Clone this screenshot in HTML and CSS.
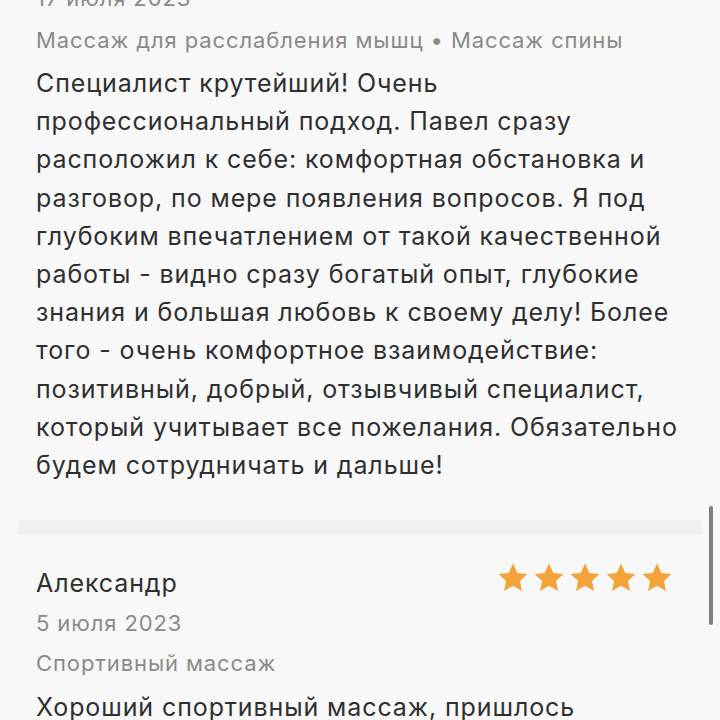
FILE: index.html
```html
<!DOCTYPE html>
<html lang="ru">
<head>
<meta charset="utf-8">
<link rel="stylesheet" href="styles.css">
</head>
<body>
<div class="page">
  <section class="review review-first">
    <div class="meta date">17 июля 2023</div>
    <div class="meta services">Массаж для расслабления мышц • Массаж спины</div>
    <p class="text">Специалист крутейший! Очень<br>профессиональный подход. Павел сразу<br>расположил к себе: комфортная обстановка и<br>разговор, по мере появления вопросов. Я под<br>глубоким впечатлением от такой качественной<br>работы - видно сразу богатый опыт, глубокие<br>знания и большая любовь к своему делу! Более<br>того - очень комфортное взаимодействие:<br>позитивный, добрый, отзывчивый специалист,<br>который учитывает все пожелания. Обязательно<br>будем сотрудничать и дальше!</p>
  </section>
  <div class="divider"></div>
  <section class="review review-second">
    <div class="head">
      <div class="name">Александр</div>
      <div class="stars">
        <svg viewBox="0 0 24 24"><path d="M12 1.8l3.05 6.6 7.15.8-5.3 4.85 1.45 7.1L12 17.55 5.65 21.15l1.45-7.1L1.8 9.2l7.15-.8z"/></svg>
        <svg viewBox="0 0 24 24"><path d="M12 1.8l3.05 6.6 7.15.8-5.3 4.85 1.45 7.1L12 17.55 5.65 21.15l1.45-7.1L1.8 9.2l7.15-.8z"/></svg>
        <svg viewBox="0 0 24 24"><path d="M12 1.8l3.05 6.6 7.15.8-5.3 4.85 1.45 7.1L12 17.55 5.65 21.15l1.45-7.1L1.8 9.2l7.15-.8z"/></svg>
        <svg viewBox="0 0 24 24"><path d="M12 1.8l3.05 6.6 7.15.8-5.3 4.85 1.45 7.1L12 17.55 5.65 21.15l1.45-7.1L1.8 9.2l7.15-.8z"/></svg>
        <svg viewBox="0 0 24 24"><path d="M12 1.8l3.05 6.6 7.15.8-5.3 4.85 1.45 7.1L12 17.55 5.65 21.15l1.45-7.1L1.8 9.2l7.15-.8z"/></svg>
      </div>
    </div>
    <div class="meta date">5 июля 2023</div>
    <div class="meta services">Спортивный массаж</div>
    <p class="text">Хороший спортивный массаж, пришлось</p>
  </section>
</div>
<div class="scrollbar"></div>
</body>
</html>
```
FILE: styles.css
```css
html, body {
  margin: 0;
  padding: 0;
  background: #f8f8f8;
  height: 720px;
  overflow: hidden;
}
body {
  font-family: Inter, "Noto Sans", sans-serif;
  color: #333333;
}
.page {
  padding: 0 36px;
}
.review-first {
  margin-top: -23px;
}
.meta {
  font-size: 22px;
  line-height: 42px;
  letter-spacing: 0.9px;
  color: #8a8a8a;
  white-space: nowrap;
}
.text {
  margin: 3px 0 0;
  font-size: 25px;
  line-height: 38.2px;
  letter-spacing: 0.9px;
  color: #2f2f2f;
  white-space: nowrap;
}
.divider {
  margin: 36px -18px 0;
  height: 15px;
  background: #f1f1f1;
}
.review-second {
  padding-top: 28px;
}
.review-second .meta {
  line-height: 40px;
}
.review-second .text {
  margin-top: 5px;
}
.head {
  display: flex;
  justify-content: space-between;
  align-items: center;
  height: 40px;
}
.name {
  font-size: 25px;
  line-height: 40px;
  letter-spacing: 0.9px;
  color: #2f2f2f;
}
.stars {
  display: flex;
  gap: 2px;
  margin-right: 10px;
  margin-top: -10px;
}
.stars svg {
  width: 34px;
  height: 34px;
  fill: #f2a33a;
}
.scrollbar {
  position: absolute;
  left: 709px;
  top: 506px;
  width: 4px;
  height: 119px;
  border-radius: 2px;
  background: #808080;
}
```
